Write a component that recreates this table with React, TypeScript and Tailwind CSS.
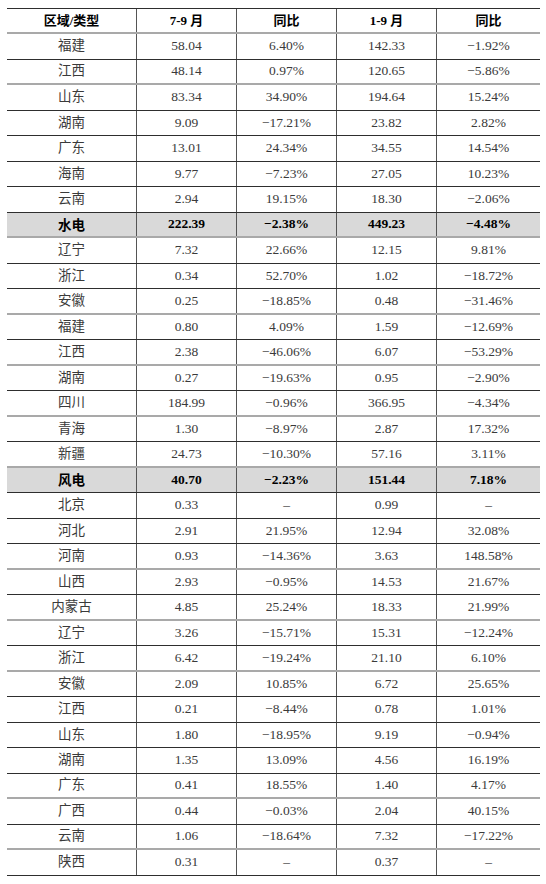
const rows: [string, string, string, string, string, boolean][] = [
  ["福建", "58.04", "6.40%", "142.33", "−1.92%", false],
  ["江西", "48.14", "0.97%", "120.65", "−5.86%", true],
  ["山东", "83.34", "34.90%", "194.64", "15.24%", false],
  ["湖南", "9.09", "−17.21%", "23.82", "2.82%", false],
  ["广东", "13.01", "24.34%", "34.55", "14.54%", false],
  ["海南", "9.77", "−7.23%", "27.05", "10.23%", false],
  ["云南", "2.94", "19.15%", "18.30", "−2.06%", false],
  ["水电", "222.39", "−2.38%", "449.23", "−4.48%", true],
  ["辽宁", "7.32", "22.66%", "12.15", "9.81%", false],
  ["浙江", "0.34", "52.70%", "1.02", "−18.72%", false],
  ["安徽", "0.25", "−18.85%", "0.48", "−31.46%", true],
  ["福建", "0.80", "4.09%", "1.59", "−12.69%", false],
  ["江西", "2.38", "−46.06%", "6.07", "−53.29%", true],
  ["湖南", "0.27", "−19.63%", "0.95", "−2.90%", false],
  ["四川", "184.99", "−0.96%", "366.95", "−4.34%", true],
  ["青海", "1.30", "−8.97%", "2.87", "17.32%", false],
  ["新疆", "24.73", "−10.30%", "57.16", "3.11%", true],
  ["风电", "40.70", "−2.23%", "151.44", "7.18%", false],
  ["北京", "0.33", "–", "0.99", "–", false],
  ["河北", "2.91", "21.95%", "12.94", "32.08%", false],
  ["河南", "0.93", "−14.36%", "3.63", "148.58%", true],
  ["山西", "2.93", "−0.95%", "14.53", "21.67%", false],
  ["内蒙古", "4.85", "25.24%", "18.33", "21.99%", true],
  ["辽宁", "3.26", "−15.71%", "15.31", "−12.24%", false],
  ["浙江", "6.42", "−19.24%", "21.10", "6.10%", true],
  ["安徽", "2.09", "10.85%", "6.72", "25.65%", false],
  ["江西", "0.21", "−8.44%", "0.78", "1.01%", false],
  ["山东", "1.80", "−18.95%", "9.19", "−0.94%", false],
  ["湖南", "1.35", "13.09%", "4.56", "16.19%", false],
  ["广东", "0.41", "18.55%", "1.40", "4.17%", true],
  ["广西", "0.44", "−0.03%", "2.04", "40.15%", false],
  ["云南", "1.06", "−18.64%", "7.32", "−17.22%", true],
  ["陕西", "0.31", "–", "0.37", "–", false],
];

const totals = ["水电", "风电"];

const font = { fontFamily: '"Liberation Serif", "Noto Sans CJK SC", serif' };

export default function App() {
  return (
    <div className="bg-white w-[546px] h-[884px] pt-[8px] pl-[7px]" style={font}>
      <div className="w-[533px] border-t border-[#2e2e2e]">
        <div className="grid grid-cols-[129px_100px_100px_100px_104px] h-[25px] border-b-2 border-[#a9a9a9] text-[13px] font-bold text-black">
          <div className="flex items-center justify-center">区域/类型</div>
          <div className="flex items-center justify-center border-l border-[#555]">7-9 月</div>
          <div className="flex items-center justify-center border-l border-[#555]">同比</div>
          <div className="flex items-center justify-center border-l border-[#555]">1-9 月</div>
          <div className="flex items-center justify-center border-l border-[#555]">同比</div>
        </div>
        {rows.map(([name, a, b, c, d, gray], i) => {
          const total = totals.includes(name);
          return (
            <div
              key={i}
              className={
                "grid grid-cols-[129px_100px_100px_100px_104px] h-[25.5px] text-[13.5px] " +
                (gray ? "border-b-2 border-[#a9a9a9] " : "border-b border-[#2e2e2e] ") +
                (total ? "bg-[#d9d9d9] font-bold text-black" : "text-[#3a3a3a]")
              }
            >
              <div className={"flex items-center justify-center " + (total ? "pt-[3px]" : "")}>{name}</div>
              <div className="flex items-center justify-center border-l border-[#555]">{a}</div>
              <div className="flex items-center justify-center border-l border-[#555]">{b}</div>
              <div className="flex items-center justify-center border-l border-[#555]">{c}</div>
              <div className="flex items-center justify-center border-l border-[#555]">{d}</div>
            </div>
          );
        })}
      </div>
    </div>
  );
}
